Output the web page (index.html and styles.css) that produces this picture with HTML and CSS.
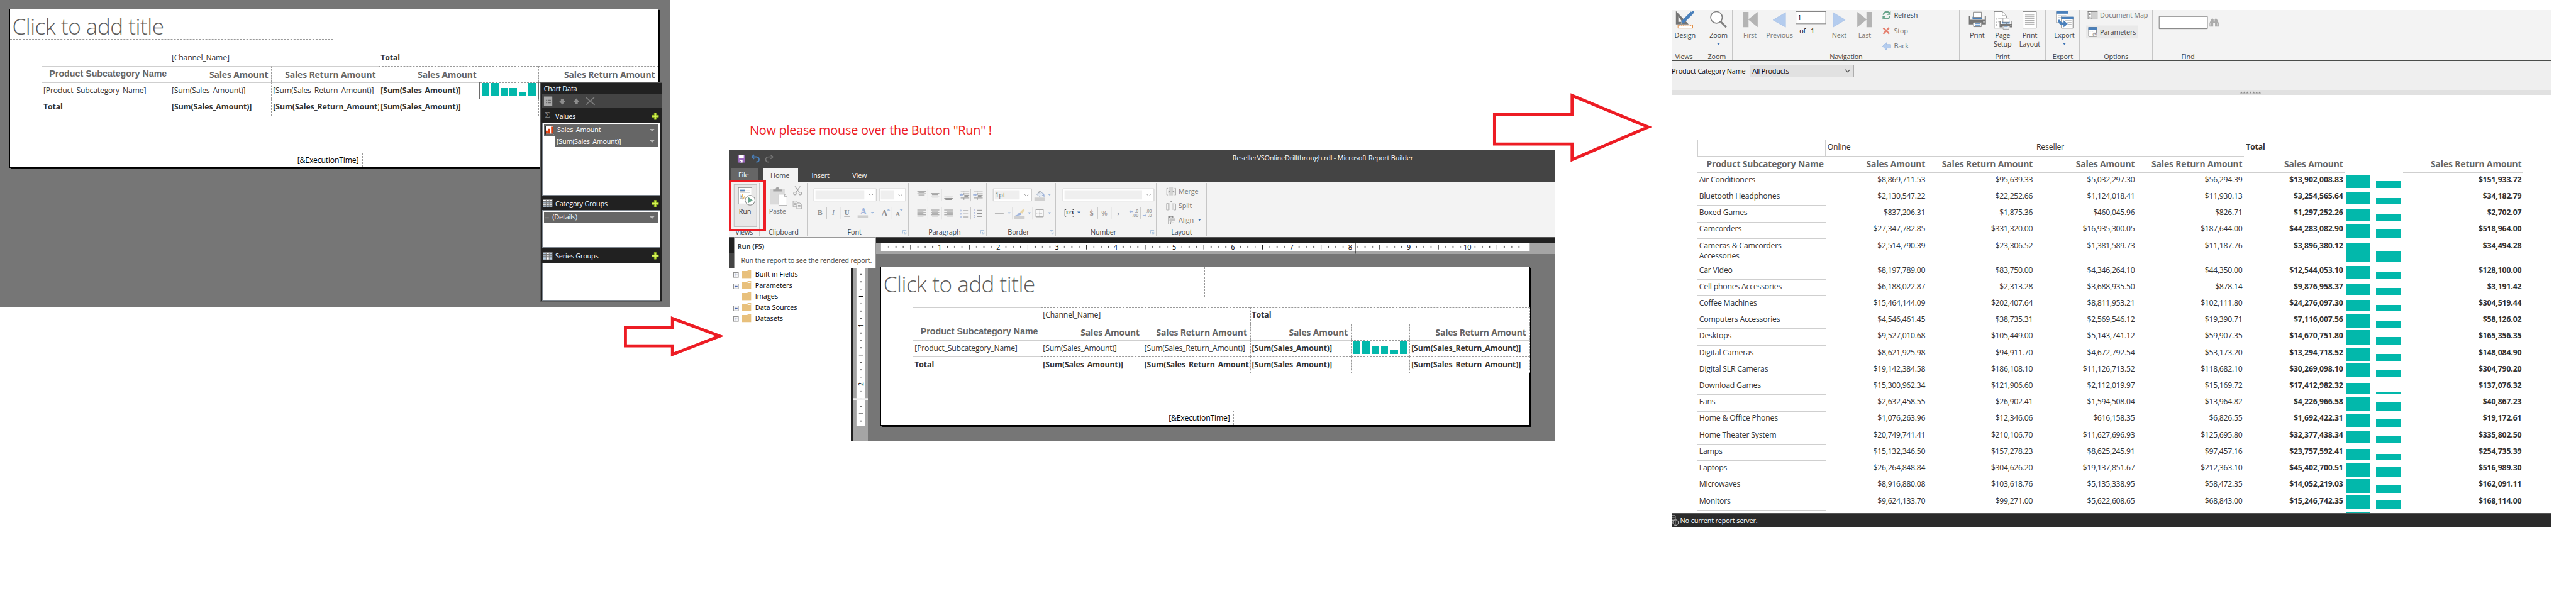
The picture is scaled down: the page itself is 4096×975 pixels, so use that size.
FILE: index.html
```html
<!DOCTYPE html>
<html lang="en">
<head>
<meta charset="utf-8">
<title>Report Builder walkthrough</title>
<link rel="stylesheet" href="styles.css">
</head>
<body>
<svg width="0" height="0" class="defs">
  <defs>
    <symbol id="plus" viewBox="0 0 12 12"><path d="M4.5.5h3v4h4v3h-4v4h-3v-4h-4v-3h4z" fill="#d8f25a" stroke="#8fb81c"/></symbol>
    <symbol id="caret" viewBox="0 0 8 4"><path d="M0 0h8L4 4z" fill="#b9b9b9"/></symbol>
    <symbol id="folder" viewBox="0 0 15 13"><path d="M0 1h8l2-1h5v13H0z" fill="#e8c07c"/><path d="M9 2.5h5" stroke="#fff"/></symbol>
    <symbol id="expand" viewBox="0 0 9 9"><rect x=".5" y=".5" width="8" height="8" fill="#f6f6f6" stroke="#8f8f8f"/><path d="M2 4.5h5M4.5 2v5" stroke="#2f4fa0"/></symbol>
    <symbol id="launch" viewBox="0 0 21 21"><path d="M1.5 17V1.5H19M8 8l9 9M18 9v9H9" fill="none" stroke="#a9c3de" stroke-width="3"/></symbol>
    <pattern id="ticks" width="96" height="14" patternUnits="userSpaceOnUse"><path d="M12.5 5.500v3M24.500 5.500v3M36.500 5.500v3M60.500 5.500v3M72.500 5.500v3M84.500 5.500v3M48.500 4v7" stroke="#000"/></pattern>
    <pattern id="vticks" width="14" height="96" patternUnits="userSpaceOnUse"><path d="M6 12.500h3M6 24.500h3M6 36.500h3M6 60.500h3M6 72.500h3M6 84.500h3M4 48.500h7" stroke="#000"/></pattern>
    <g id="printer"><path d="M0 21h6v18h72V21h6v40h-18v-8H20v8H0z" fill="#757575"/><path d="M18 24h48v12H18z" fill="#4a80bb"/><path d="M22 1h40v26H22z" fill="#fff" stroke="#808080" stroke-width="3"/><path d="M23 51h38v22H23z" fill="#fff" stroke="#808080" stroke-width="3"/><path d="M30 58h24M30 66h24" stroke="#4a80bb" stroke-width="3"/><path d="M71 46h6v6h-6z" fill="#fff"/></g>
  </defs>
</svg>
<main class="canvas">

  <section class="window design-window">
    <div class="page">
      <div class="title-box">Click to add title</div>
      <div class="matrix">
        <div class="c sl st"></div><div class="c sl span2">[Channel_Name]</div><div class="c span3 b end">Total</div>
        <div class="c st h arial">Product Subcategory Name</div><div class="c st h">Sales Amount</div><div class="c st h">Sales Return Amount</div><div class="c h">Sales Amount</div><div class="c"></div><div class="c h end">Sales Return Amount</div>
        <div class="c st">[Product_Subcategory_Name]</div><div class="c st">[Sum(Sales_Amount)]</div><div class="c st">[Sum(Sales_Return_Amount)]</div><div class="c st b">[Sum(Sales_Amount)]</div><div class="c chart selected"><i class="b1"></i><i class="b2"></i><i class="b3"></i><i class="b4"></i><i class="b5"></i><i class="b6"></i></div><div class="c end"></div>
        <div class="c st b last">Total</div><div class="c b last">[Sum(Sales_Amount)]</div><div class="c b last">[Sum(Sales_Return_Amount)]</div><div class="c b last">[Sum(Sales_Amount)]</div><div class="c last"></div><div class="c last end"></div>
      </div>
      <div class="footer"><div class="exec">[&amp;ExecutionTime]</div></div>
    </div>
    <aside class="chart-data">
      <div class="cd-title">Chart Data</div>
      <svg class="cd-tools" viewBox="78 98 588 72"><rect x="87" y="112" width="41" height="45" fill="#a9a9a9"/><path d="M97 130h6M97 143h6M109 130h12M109 143h12" stroke="#666" stroke-width="4"/><path d="M170 123h14v12h8l-15 17-15-17h8z" fill="#8c8c8c"/><path d="M239 150h14v-12h8l-15-17-15 17h8z" fill="#8c8c8c"/><path d="M294 117l42 36M334 116l-40 36" stroke="#7d7d7d" stroke-width="5"/></svg>
      <div class="cd-head"><span class="ic sigma">Σ</span><span>Values</span><svg class="plus"><use href="#plus"/></svg></div>
      <div class="cd-box values">
        <div class="cd-item"><svg class="bars" viewBox="0 0 14 14"><path d="M0 0h14v14H0z" fill="#fff"/><path d="M1 13V8h3v5zM5 13V5h3v8zM9.500 13V1.500H13V13z" fill="#e03c0c"/><path d="M.5 14V.5H13M13.500 1v12.500H0" fill="none" stroke="#222"/></svg><span>Sales_Amount</span><svg class="caret"><use href="#caret"/></svg></div>
        <div class="cd-item sub"><span>[Sum(Sales_Amount)]</span><svg class="caret"><use href="#caret"/></svg></div>
      </div>
      <div class="cd-head"><svg class="ic grid" viewBox="0 0 16 13"><path d="M0 0h16v13H0z" fill="#777"/><path d="M1 1h4v2H1zM6 1h4v2H6zM11 1h4v2h-4zM1 7h4v2H1zM6 7h4v2H6zM11 7h4v2h-4z" fill="#fff"/><path d="M1 4h4v2H1zM6 4h4v2H6zM11 4h4v2h-4zM1 10h4v2H1zM6 10h4v2H6zM11 10h4v2h-4z" fill="#b4cbe0"/></svg><span>Category Groups</span><svg class="plus"><use href="#plus"/></svg></div>
      <div class="cd-box category">
        <div class="cd-item"><svg class="lines" viewBox="0 0 6 6"><path d="M0 .5h6M0 3h6M0 5.500h6" stroke="#858585"/></svg><span>(Details)</span><svg class="caret"><use href="#caret"/></svg></div>
      </div>
      <div class="cd-head"><svg class="ic grid" viewBox="0 0 16 13"><path d="M0 0h16v13H0z" fill="#777"/><path d="M1 1h4v2H1zM1 4h4v2H1zM1 7h4v2H1zM1 10h4v2H1zM11 1h4v2h-4zM11 4h4v2h-4zM11 7h4v2h-4zM11 10h4v2h-4z" fill="#b4cbe0"/><path d="M6 1h4v2H6zM6 4h4v2H6zM6 7h4v2H6zM6 10h4v2H6z" fill="#fff"/></svg><span>Series Groups</span><svg class="plus"><use href="#plus"/></svg></div>
      <div class="cd-box series"></div>
    </aside>
  </section>

  <svg class="arrow arrow-a" viewBox="0 0 160 66"><path d="M2.500 18.500h77V3.500L157 32.500 79.500 62.500v-14h-77z"/></svg>
  <svg class="arrow arrow-b" viewBox="0 0 262 114"><path d="M3.500 34.500h127V4L255 55.500 130.500 109V83.500H3.500z"/></svg>
  <p class="note">Now please mouse over the Button "Run" !</p>

  <section class="window builder">
    <header class="titlebar">
      <svg class="qat" viewBox="75 180 190 50"><path d="M81 189h36v36H81z" fill="#9c68bd"/><path d="M87 189h24v15H87zM90 212h15v13H90z" fill="#fff"/><path d="M93 217h5v8h-5z" fill="#9c68bd"/><path d="M150 197h22q14 1 14 13t-14 12M162 187l-11 10 11 10" fill="none" stroke="#4a80bb" stroke-width="6"/><path d="M255 197h-22q-14 1-14 13t14 12M243 187l11 10-11 10" fill="none" stroke="#777" stroke-width="5"/></svg>
      <span class="wtitle">ResellerVSOnlineDrillthrough.rdl - Microsoft Report Builder</span>
    </header>
    <nav class="tabs"><span class="tab file">File</span><span class="tab home">Home</span><span class="tab insert">Insert</span><span class="tab view">View</span></nav>
    <div class="ribbon">
      <section class="g g-views">
        <svg viewBox="39 324 147 225"><rect x="64.500" y="337.500" width="111" height="207" fill="#e8e8e8" stroke="#bdbdbd" stroke-width="3"/><path d="M85.500 352.500h66v81h-66z" fill="#fff" stroke="#777" stroke-width="3"/><path d="M93 365h24" stroke="#4a80bb" stroke-width="4"/><path d="M93 372h24M120 368h24M93 377h51" stroke="#aaa" stroke-width="2"/><path d="M94 385v21h20" fill="none" stroke="#999" stroke-width="2"/><path d="M97 391h6v12h-6z" fill="#4a80bb"/><path d="M104 386h6v17h-6z" fill="#e8b45c"/><path d="M107 412l12-20" stroke="#e8b45c" stroke-width="4"/><circle cx="143" cy="415" r="24" fill="#fff" stroke="#777" stroke-width="3"/><path d="M134 400l22 15-22 15z" fill="#6aa58c"/><text x="118" y="480" class="m">Run</text></svg>
        <span class="gl">Views</span>
      </section>
      <section class="g g-clip">
        <svg viewBox="189 324 234 225"><path d="M240 361h72v75h-72z" fill="#dadada"/><path d="M255 372v-10h12q0-11 9-11t9 11h12v10z" fill="#a3a3a3"/><path d="M283 385h28l12 12v43h-40z" fill="#fff" stroke="#b3b3b3" stroke-width="3"/><path d="M311 385v12h12" fill="none" stroke="#b3b3b3" stroke-width="3"/><text x="276" y="480" class="m dim">Paste</text><g fill="none" stroke="#a8a8a8" stroke-width="4"><path d="M362 347l22 30M388 347l-22 30"/><circle cx="362" cy="382" r="6.500"/><circle cx="388" cy="382" r="6.500"/></g><g fill="#f3f3f3" stroke="#a8a8a8" stroke-width="3"><path d="M353 419h16l8 8v20h-24z"/><path d="M371 429h16l8 8v20h-24z"/><path d="M377 440h12M377 447h12M358 430h8M358 437h8" /></g></svg>
        <span class="gl">Clipboard</span>
      </section>
      <section class="g g-font">
        <svg viewBox="426 324 492 225"><g fill="#fff" stroke="#c6c6c6" stroke-width="3"><path d="M457.500 358.500h306v60h-306zM778.500 358.500h129v60h-129z"/></g><path d="M465 366h240v45H465zM786 366h63v45h-63z" fill="#efefef"/><path d="M726 383l12 12 12-12M870 383l12 12 12-12" fill="none" stroke="#9a9a9a" stroke-width="3"/><path d="M520 448v58M586 448v58M841 448v58" stroke="#c6c6c6" stroke-width="3"/><text x="487" y="489" class="serif">B</text><text x="552" y="489" class="serif it">I</text><text x="619" y="487" class="serif">U</text><path d="M606 494h27" stroke="#8e8e8e" stroke-width="3"/><text x="700" y="486" class="serif big blue">A</text><path d="M672 489h51v14h-51z" fill="#cfcfcf"/><path d="M737 472h16l-8 8z" fill="#9fb9dc"/><text x="804" y="495" class="serif big">A</text><path d="M816 465l8-8 8 8z" fill="#9fb9dc"/><text x="869" y="495" class="serif sm">A</text><path d="M879 460h15l-7 8z" fill="#9fb9dc"/></svg>
        <span class="gl">Font</span><svg class="launch"><use href="#launch"/></svg>
      </section>
      <section class="g g-para">
        <svg viewBox="921 324 381 225"><path d="M1015 360v60M1081 360v60M1225 360v60M1015 450v60M1081 450v60M1225 450v60" stroke="#c6c6c6" stroke-width="3"/><g stroke="#8e8e8e" stroke-width="3" fill="none"><path d="M963 371h42M969 377h30M963 383h42M969 389h30M1029 382h42M1035 388h30M1029 394h42M1035 400h30M1095 394h42M1101 400h30M1095 406h42M1101 412h30"/><path d="M963 463h42M963 469h30M963 475h42M963 481h30M963 487h42M963 493h30M1029 463h42M1035 469h30M1029 475h42M1035 481h30M1029 487h42M1035 493h30M1095 463h42M1107 469h30M1095 475h42M1107 481h30M1095 487h42M1107 493h30"/><path d="M1176 374h42M1194 383h24M1194 390h24M1194 397h18M1176 404h42M1242 374h42M1260 383h24M1260 390h24M1260 397h18M1242 404h42"/><path d="M1192 368v45M1258 368v45" stroke-dasharray="3 3"/><path d="M1188 466h24M1188 482h24M1188 497h24M1255 464h27M1255 480h27M1255 495h27"/></g><path d="M1170 388l9-8v5h10v6h-10v5zM1256 388l-9-8v5h-10v6h10v5z" fill="#9fb4dc"/><g fill="none" stroke="#9fb4dc" stroke-width="2.500"><circle cx="1177" cy="466" r="3"/><circle cx="1177" cy="482" r="3"/><circle cx="1177" cy="497" r="3"/></g><text x="1243" y="470" class="nums">1</text><text x="1243" y="486" class="nums">2</text><text x="1243" y="501" class="nums">3</text></svg>
        <span class="gl">Paragraph</span><svg class="launch"><use href="#launch"/></svg>
      </section>
      <section class="g g-border">
        <svg viewBox="105 204 336 225"><path d="M136.500 238.500h189v60h-189z" fill="#fff" stroke="#c6c6c6" stroke-width="3"/><path d="M144 246h123v45H144z" fill="#efefef"/><text x="146" y="280" class="dim">1pt</text><path d="M288 263l12 12 12-12" fill="none" stroke="#9a9a9a" stroke-width="3"/><path d="M339 282h51v15h-51zM240 372h51v15h-51z" fill="#cfcfcf"/><path d="M350 266l18-14 16 13-15 15z" fill="#e3eaf4" stroke="#9aa9c0" stroke-width="2.500"/><path d="M361 261q-2-12 6-12t4 16" fill="none" stroke="#999" stroke-width="2.500"/><path d="M378 258q13 3 10 22-7-4-8-13z" fill="#9fb4dc"/><path d="M405 264h15l-7 8zM207 354h15l-7 8zM306 354h15l-7 8zM405 354h15l-7 8z" fill="#9fb9dc"/><path d="M145 361h43" stroke="#999" stroke-width="3"/><path d="M232 330v60M331 330v60" stroke="#c6c6c6" stroke-width="3"/><path d="M243 370q17-2 18-12l10-3 5 9q-8 9-33 6z" fill="#9fb4dc"/><path d="M268 354l15-15q8-2 8 5l-12 17z" fill="#e9d6a8"/><path d="M346.500 340.500h36v36h-36z" fill="#f8f8f8" stroke="#858585" stroke-width="3"/><path d="M364 345v29M350 359h29" stroke="#aaa" stroke-width="2.500" stroke-dasharray="3 3"/></svg>
        <span class="gl">Border</span><svg class="launch"><use href="#launch"/></svg>
      </section>
      <section class="g g-number">
        <svg viewBox="444 204 492 225"><path d="M478.500 238.500h447v60h-447z" fill="#fff" stroke="#c6c6c6" stroke-width="3"/><path d="M486 246h381v45H486z" fill="#efefef"/><path d="M888 263l12 12 12-12" fill="none" stroke="#9a9a9a" stroke-width="3"/><path d="M494 341h-6v33h6M526 341h6v33h-6" fill="none" stroke="#333" stroke-width="3"/><text x="510" y="366" class="serif n123">123</text><path d="M549 351h16l-8 9z" fill="#3f74b5"/><path d="M649 328v58M715 328v58M859 328v58" stroke="#c6c6c6" stroke-width="3"/><text x="619" y="371" class="serif">$</text><text x="682" y="371" class="m pct">%</text><text x="750" y="366" class="serif">,</text><text x="849" y="356" class="dec">.0</text><text x="849" y="376" class="dec">.00</text><text x="915" y="356" class="dec">.00</text><text x="915" y="376" class="dec">.0</text><path d="M804 350l9-7v5h10v5h-10v5zM889 370l-9-7v5h-10v5h10v5z" fill="#9fb4dc"/></svg>
        <span class="gl">Number</span><svg class="launch"><use href="#launch"/></svg>
      </section>
      <section class="g g-layout">
        <svg viewBox="939 204 243 225"><path d="M1001 229h19v42h-19z" fill="#d4d4d4"/><g fill="none" stroke="#aaa" stroke-width="3"><path d="M995 236h-6v33h6M1027 236h6v33h-6M988 341v-30h9v32h-9zM1024 341v-28h9v30h-9z"/></g><path d="M997 246l9 7-9 7zM1026 246l-9 7 9 7zM1005 298h12l-6 7z" fill="#999"/><path d="M997 310h9v33h-9zM1016 310h7v33h-7z" fill="#d8d8d8"/><path d="M998 372v42" stroke="#666" stroke-width="3"/><path d="M1003 374h16v7h-16z" fill="none" stroke="#666" stroke-width="3"/><path d="M1002 384h27v12h-27z" fill="#c4c4c4"/><path d="M1023 406h-18M1010 400l-6 6 6 6" fill="none" stroke="#666" stroke-width="3"/><text x="1047" y="262" class="dim">Merge</text><text x="1047" y="333" class="dim">Split</text><text x="1047" y="405" class="dim">Align</text><path d="M1142 387h16l-8 9z" fill="#3f74b5"/></svg>
        <span class="gl">Layout</span>
      </section>
    </div>
    <div class="band"></div>
    <div class="workspace">
      <aside class="report-data">
        <div class="rd-dark"></div><div class="rd-grey"></div>
        <ul class="tree">
          <li><svg class="ex"><use href="#expand"/></svg><svg class="fo"><use href="#folder"/></svg>Built-in Fields</li>
          <li><svg class="ex"><use href="#expand"/></svg><svg class="fo"><use href="#folder"/></svg>Parameters</li>
          <li><span class="ex"></span><svg class="fo"><use href="#folder"/></svg>Images</li>
          <li><svg class="ex"><use href="#expand"/></svg><svg class="fo"><use href="#folder"/></svg>Data Sources</li>
          <li><svg class="ex"><use href="#expand"/></svg><svg class="fo"><use href="#folder"/></svg>Datasets</li>
        </ul>
      </aside>
      <div class="split"></div>
      <div class="designer">
        <svg class="hruler" viewBox="0 0 1148 19"><path d="M45 0h1062v14H45z" fill="#fff"/><g transform="translate(45 0)"><rect width="1050" height="14" fill="url(#ticks)"/><g class="rn"><text x="96" y="11">1</text><text x="192" y="11">2</text><text x="288" y="11">3</text><text x="384" y="11">4</text><text x="480" y="11">5</text><text x="576" y="11">6</text><text x="672" y="11">7</text><text x="768" y="11">8</text><text x="864" y="11">9</text><text x="960" y="11">10</text></g><path d="M776.500 0v18" stroke="#000"/></g></svg>
        <div class="dcols">
          <svg class="vruler" viewBox="0 0 24 306"><path d="M5 21h14v260H5z" fill="#fff"/><g transform="translate(5 21)"><rect width="14" height="254" fill="url(#vticks)"/><g class="rn"><text transform="translate(11 96) rotate(-90)">1</text><text transform="translate(11 192) rotate(-90)">2</text></g></g><path d="M0 236h24v3H0z" fill="#efefef"/></svg>
          <div class="surface">
            <div class="page">
              <div class="title-box">Click to add title</div>
              <div class="matrix">
                <div class="c sl st"></div><div class="c sl span2">[Channel_Name]</div><div class="c span3 b end">Total</div>
                <div class="c st h arial">Product Subcategory Name</div><div class="c st h">Sales Amount</div><div class="c st h">Sales Return Amount</div><div class="c h">Sales Amount</div><div class="c"></div><div class="c h end">Sales Return Amount</div>
                <div class="c st">[Product_Subcategory_Name]</div><div class="c st">[Sum(Sales_Amount)]</div><div class="c st">[Sum(Sales_Return_Amount)]</div><div class="c st b">[Sum(Sales_Amount)]</div><div class="c chart"><i class="b1"></i><i class="b2"></i><i class="b3"></i><i class="b4"></i><i class="b5"></i><i class="b6"></i></div><div class="c st b end">[Sum(Sales_Return_Amount)]</div>
                <div class="c st b last">Total</div><div class="c b last">[Sum(Sales_Amount)]</div><div class="c b last">[Sum(Sales_Return_Amount)]</div><div class="c b last">[Sum(Sales_Amount)]</div><div class="c last"></div><div class="c b last end">[Sum(Sales_Return_Amount)]</div>
              </div>
              <div class="footer"><div class="exec">[&amp;ExecutionTime]</div></div>
            </div>
          </div>
        </div>
      </div>
    </div>
    <div class="tooltip"><b>Run (F5)</b><span>Run the report to see the rendered report.</span></div>
    <div class="highlight"></div>
  </section>

  <section class="window viewer">
    <div class="vribbon">
      <section class="g v-views">
        <svg viewBox="48 48 141 207"><path d="M69 53v65h63zM81 80l19 26H81z" fill="#757575" fill-rule="evenodd"/><path d="M92 117l5-16 46-46 12 11-47 46z" fill="#4a80bb"/><path d="M146 57l7-6q7 2 6 8l-6 7z" fill="#4a80bb"/><path d="M93 116l3-9 6 6z" fill="#e8c48c"/><path d="M79.500 121.500h72v15h-72z" fill="#fff" stroke="#e08a3e" stroke-width="3"/><path d="M88 122v5M97 122v5M106 122v5M115 122v5M124 122v5M133 122v5M142 122v5" stroke="#e08a3e" stroke-width="2.500"/><text x="114" y="183" class="m">Design</text></svg>
        <span class="gl">Views</span>
      </section>
      <section class="g v-zoom">
        <svg viewBox="192 48 153 207"><circle cx="267" cy="84" r="28.500" fill="#fff" stroke="#808080" stroke-width="5"/><path d="M288 105l27 27" stroke="#808080" stroke-width="9"/><text x="277" y="183" class="m">Zoom</text><path d="M269 210h16l-8 9z" fill="#3f74b5"/></svg>
        <span class="gl">Zoom</span>
      </section>
      <section class="g v-nav">
        <svg viewBox="348 48 1110 207"><path d="M399 57h27v36l45-36v75l-45-36v36h-27zM1032 57h-27v36l-45-36v75l45-36v36h27z" fill="#b4b4b4"/><path d="M608 60v72l-62-35zM841 60v72l60-36z" fill="#b4ccee" stroke="#a3bde4" stroke-width="2"/><text x="433" y="183" class="m dim">First</text><text x="578" y="183" class="m dim">Previous</text><path d="M658.500 55.500h147v60h-147z" fill="#fff" stroke="#777" stroke-width="3"/><text x="667" y="96" class="k">1</text><text x="676" y="161" class="k">of</text><text x="731" y="161" class="k">1</text><text x="871" y="183" class="m dim">Next</text><text x="996" y="183" class="m dim">Last</text><g fill="none" stroke="#6aa58c" stroke-width="7"><path d="M1088 72q2-15 18-15 8 0 13 5M1120 76q-2 15-17 15-9 0-14-6"/></g><path d="M1124 53v19h-18zM1084 95V76h18z" fill="#6aa58c"/><path d="M1088 136l29 28M1116 135l-28 30" stroke="#e5806f" stroke-width="8"/><path d="M1084 226l19-18v9h21v18h-21v9z" fill="#b4ccee" stroke="#8fb0df" stroke-width="2"/><text x="1140" y="84">Refresh</text><text x="1140" y="162" class="dim">Stop</text><text x="1140" y="237" class="dim">Back</text></svg>
        <span class="gl">Navigation</span>
      </section>
      <section class="g v-print">
        <svg viewBox="81 48 420 207"><use href="#printer" x="126" y="57"/><text x="167" y="183" class="m">Print</text><path d="M250.500 55.500h40l20 20v61h-60z" fill="#fff" stroke="#808080" stroke-width="3"/><path d="M290 56v20h20" fill="none" stroke="#808080" stroke-width="3"/><g fill="none" stroke="#999" stroke-width="2.500"><circle cx="262" cy="91" r="3"/><circle cx="262" cy="106" r="3"/><circle cx="262" cy="121" r="3"/><path d="M270 91h18M270 106h8"/></g><use href="#printer" transform="translate(277 87) scale(.75)"/><text x="292" y="183" class="m">Page</text><text x="292" y="228" class="m">Setup</text><path d="M391.500 55.500h66v81h-66z" fill="#fff" stroke="#808080" stroke-width="3"/><path d="M402 72h45M402 81h45M402 90h45M402 99h45M402 108h45M402 117h45" stroke="#aaa" stroke-width="3"/><text x="425" y="183" class="m">Print</text><text x="425" y="228" class="m">Layout</text></svg>
        <span class="gl">Print</span>
      </section>
      <section class="g v-export">
        <svg viewBox="504 48 165 207"><path d="M556.500 56h57v54h-57z" fill="#fff" stroke="#808080" stroke-width="3"/><path d="M555 54h60v12h-60z" fill="#4a80bb"/><path d="M565 76h40M565 85h15v-9" fill="none" stroke="#aaa" stroke-width="3"/><path d="M580.500 83h57v54h-57z" fill="#fff" stroke="#808080" stroke-width="3"/><path d="M579 81h60v12h-60z" fill="#4a80bb"/><path d="M600 100h30M610 109h20M612 118h18M606 127h24" stroke="#aaa" stroke-width="3"/><path d="M564 96h10q1 13 17 13v-11l21 18-21 17v-11q-27 0-27-26z" fill="#4a80bb"/><text x="595" y="183" class="m">Export</text><path d="M587 210h16l-8 9z" fill="#3f74b5"/></svg>
        <span class="gl">Export</span>
      </section>
      <section class="g v-options">
        <svg viewBox="672 48 354 207"><path d="M712.500 52.500h45v39h-45z" fill="#fff" stroke="#777" stroke-width="3"/><path d="M711 51h48v6h-48z" fill="#777"/><path d="M732 57h24v33h-24z" fill="#cfcfcf"/><path d="M731 57v34M717 64h9M717 71h9M717 78h9M717 85h9" stroke="#777" stroke-width="3"/><text x="771" y="84" class="dim">Document Map</text><path d="M703 124h256v64H703z" fill="#e9e9e9"/><path d="M715.500 133h39v45h-39z" fill="#fff" stroke="#777" stroke-width="3"/><path d="M714 132h42v12h-42z" fill="#4a80bb"/><path d="M720 152h6M730 152h8M720 161h6M730 161h6M720 170h12" stroke="#777" stroke-width="3"/><circle cx="745" cy="167" r="11" fill="#f3f3f3"/><text x="745" y="175" class="at">@</text><text x="771" y="168">Parameters</text></svg>
        <span class="gl">Options</span>
      </section>
      <section class="g v-find">
        <svg viewBox="1029 48 345 207"><path d="M1060.500 79.500h237v60h-237z" fill="#fff" stroke="#777" stroke-width="3"/><path d="M1308 129v-18l8-17q6-8 12 0v10h5V94q6-8 12 0l8 17v18h-18v-19h-9v19z" fill="#ababab"/><path d="M1313 112v12M1347 112v12" stroke="#eee" stroke-width="3"/></svg>
        <span class="gl">Find</span>
      </section>
    </div>
    <div class="params"><label>Product Category Name</label><div class="select"><span>All Products</span><svg viewBox="0 0 10 6"><path d="M1 .8l4 4 4-4" fill="none" stroke="#555" stroke-width="1.200"/></svg></div></div>
    <div class="splitter"><svg viewBox="0 0 34 4"><path d="M0 3.500l2-3 2 3zM5 3.500l2-3 2 3zM10 3.500l2-3 2 3zM15 3.500l2-3 2 3zM20 3.500l2-3 2 3zM25 3.500l2-3 2 3zM30 3.500l2-3 2 3z" fill="#8a8a8a"/></svg></div>
    <div class="report">
      <table class="rt">
        <colgroup><col class="k1"><col class="k2"><col class="k3"><col class="k4"><col class="k5"><col class="k6"><col class="k7"><col class="k8"></colgroup>
        <thead>
          <tr class="r1"><th class="box"></th><th colspan="2" class="ul">Online</th><th colspan="2" class="ul">Reseller</th><th colspan="3" class="tb">Total</th></tr>
          <tr class="r2"><th class="ul">Product Subcategory Name</th><th class="ul">Sales Amount</th><th class="ul">Sales Return Amount</th><th class="ul">Sales Amount</th><th class="ul">Sales Return Amount</th><th class="ul">Sales Amount</th><th></th><th class="ul">Sales Return Amount</th></tr>
        </thead>
        <tbody id="rows"></tbody>
      </table>
    </div>
    <footer class="status"><svg viewBox="0 0 12 18"><path d="M1 1h5v6H1M1 4h4M1 9h4" fill="none" stroke="#ddd"/><circle cx="6.500" cy="12.500" r="4.500" fill="#2b2b2b" stroke="#ddd"/><path d="M6.500 8v9" stroke="#999" stroke-width=".6"/></svg>No current report server.</footer>
  </section>
</main>
<script src="report.js"></script>
</body>
</html>
```

FILE: report.js
```js
// name, online sales, online returns, reseller sales, reseller returns, total sales, total returns, bar heights
const data = [
  ["Air Conditioners", "$8,869,711.53", "$95,639.33", "$5,032,297.30", "$56,294.39", "$13,902,008.83", "$151,933.72", 21, 12],
  ["Bluetooth Headphones", "$2,130,547.22", "$22,252.66", "$1,124,018.41", "$11,930.13", "$3,254,565.64", "$34,182.79", 21, 11],
  ["Boxed Games", "$837,206.31", "$1,875.36", "$460,045.96", "$826.71", "$1,297,252.26", "$2,702.07", 20, 11],
  ["Camcorders", "$27,347,782.85", "$331,320.00", "$16,935,300.05", "$187,644.00", "$44,283,082.90", "$518,964.00", 22, 14],
  ["Cameras & Camcorders Accessories", "$2,514,790.39", "$23,306.52", "$1,381,589.73", "$11,187.76", "$3,896,380.12", "$34,494.28", 30, 17],
  ["Car Video", "$8,197,789.00", "$83,750.00", "$4,346,264.10", "$44,350.00", "$12,544,053.10", "$128,100.00", 20, 10],
  ["Cell phones Accessories", "$6,188,022.87", "$2,313.28", "$3,688,935.50", "$878.14", "$9,876,958.37", "$3,191.42", 19, 11],
  ["Coffee Machines", "$15,464,144.09", "$202,407.64", "$8,811,953.21", "$102,111.80", "$24,276,097.30", "$304,519.44", 19, 11],
  ["Computers Accessories", "$4,546,461.45", "$38,735.31", "$2,569,546.12", "$19,390.71", "$7,116,007.56", "$58,126.02", 22, 12],
  ["Desktops", "$9,527,010.68", "$105,449.00", "$5,143,741.12", "$59,907.35", "$14,670,751.80", "$165,356.35", 23, 12],
  ["Digital Cameras", "$8,621,925.98", "$94,911.70", "$4,672,792.54", "$53,173.20", "$13,294,718.52", "$148,084.90", 21, 11],
  ["Digital SLR Cameras", "$19,142,384.58", "$186,108.10", "$11,126,713.52", "$118,682.10", "$30,269,098.10", "$304,790.20", 23, 13],
  ["Download Games", "$15,300,962.34", "$121,906.60", "$2,112,019.97", "$15,169.72", "$17,412,982.32", "$137,076.32", 18, 2],
  ["Fans", "$2,632,458.55", "$26,902.41", "$1,594,508.04", "$13,964.82", "$4,226,966.58", "$40,867.23", 21, 13],
  ["Home & Office Phones", "$1,076,263.96", "$12,346.06", "$616,158.35", "$6,826.55", "$1,692,422.31", "$19,172.61", 22, 12],
  ["Home Theater System", "$20,749,741.41", "$210,106.70", "$11,627,696.93", "$125,695.80", "$32,377,438.34", "$335,802.50", 20, 11],
  ["Lamps", "$15,132,346.50", "$157,278.23", "$8,625,245.91", "$97,457.16", "$23,757,592.41", "$254,735.39", 18, 10],
  ["Laptops", "$26,264,848.84", "$304,626.20", "$19,137,851.67", "$212,363.10", "$45,402,700.51", "$516,989.30", 21, 15],
  ["Microwaves", "$8,916,880.08", "$103,618.76", "$5,135,338.95", "$58,472.35", "$14,052,219.03", "$162,091.11", 22, 12],
  ["Monitors", "$9,624,133.70", "$99,271.00", "$5,622,608.65", "$68,843.00", "$15,246,742.35", "$168,114.00", 23, 14],
  ["", "", "", "", "", "", "", 22, 0]
];

document.getElementById("rows").innerHTML = data.map(r => {
  const name = r[0].replace("&", "&amp;");
  const cls = r[0].length > 30 ? ' class="tall"' : "";
  return `<tr${cls}><td class="name">${name}</td><td>${r[1]}</td><td>${r[2]}</td><td>${r[3]}</td><td>${r[4]}</td>` +
    `<td class="tot">${r[5]}</td><td class="spark"><div><i style="height:${r[7]}px"></i><i style="height:${r[8]}px"></i></div></td>` +
    `<td class="tot">${r[6]}</td></tr>`;
}).join("");
```

FILE: styles.css
```css
*{box-sizing:border-box}
html{overflow:hidden;background:#fff}
body{margin:0;background:#fff;font:11.2px/14px "Open Sans","Noto Sans",sans-serif;letter-spacing:-.18px;color:#000}
svg{display:block;overflow:visible}
.defs{position:absolute}
.canvas{position:relative;width:4216px;height:1003px;overflow:hidden;zoom:.9715}
.window{position:absolute;overflow:hidden}

/* report page */
.design-window{left:0;top:0;width:1097px;height:502px;background:#767676;padding:14px 0 0 15px}
.page{width:1063px;height:261px;background:#fff;border:1px solid #000;box-shadow:2px 2px 0 #000;color:#333}
.title-box{width:530px;height:50px;border-right:1px dashed #999;border-bottom:1px dashed #999;padding-left:4px;font-size:36px;font-weight:300;line-height:50px;padding-top:4px;letter-spacing:-.46px;color:#5c5c5c;white-space:nowrap}
.matrix{display:grid;grid-template-columns:210px 166px 176px 165px 96px 197px;grid-template-rows:27px 27px 27px 28px;margin:16px 0 0 52px;width:1010px;font-size:12.6px;line-height:17px;letter-spacing:-.21px;white-space:nowrap}
.c{border-left:1px dashed #999;border-top:1px dashed #999;padding:4px 3px 0 2px;overflow:hidden;background:#fff}
.span2{grid-column:span 2}
.span3{grid-column:span 3}
.sl{border-left:1px solid #cfcfcf}
.st{border-top:1px solid #cfcfcf}
.end{border-right:1px dashed #999}
.last{border-bottom:1px dashed #999}
.b{font-weight:700;letter-spacing:-.08px}
.h{font-size:14.300px;font-weight:700;letter-spacing:-.12px;color:#666;text-align:right;padding:5px 5px 0 0}
.arial{font-family:"Liberation Sans",Arial,sans-serif;font-size:14.670px;letter-spacing:0;padding-top:3px}
.chart{display:flex;align-items:flex-end;padding:0 0 4px 2px}
.chart i{background:#02b8ab;width:12px;margin-right:3px}
.chart .b1{height:22px}
.chart .b2{height:24px;width:13px}
.chart .b3,.chart .b4{height:14px}
.chart .b5{height:7px;width:13px}
.chart .b6{height:24px;margin:0}
.selected{outline:2px solid #6b6b6b;outline-offset:0;position:relative}
.footer{margin-top:41px;border-top:1px dashed #999;height:43px;padding:18px 0 0 384px}
.exec{width:194px;height:24px;border:1px dashed #999;border-bottom:0;padding:3px 6px 0 0;text-align:right;color:#000;font-size:12.600px;line-height:17px;letter-spacing:-.21px}

/* chart data pane */
.chart-data{position:absolute;left:884px;top:135px;width:200px;height:359px;background:#212121;border:1px solid #5a5a5a;padding:0 2px;color:#fff}
.cd-title{height:17px;padding:2px 0 0 3px}
.cd-tools{width:196px;height:24px;background:#444}
.cd-head{display:flex;align-items:center;height:24px;gap:5px;padding:2px 3px 0 1px}
.cd-head .ic{width:16px;height:13px}
.cd-head .plus{width:12px;height:12px;margin-left:auto}
.sigma{font:700 14px/13px "Liberation Serif",serif;color:#777;text-align:center}
.cd-box{background:#fff;border:1px solid #7f8790;padding:2px;width:194px}
.values{height:119px}
.category{height:62px}
.series{height:62px}
.cd-item{background:#666;height:18px;display:flex;align-items:center;gap:6px;padding:0 7px 2px 2px;margin-bottom:1px}
.cd-item.sub{margin-left:18px;padding-left:3px;letter-spacing:-.3px}
.cd-item .bars{width:14px;height:14px;margin-top:2px}
.cd-item .lines{width:6px;height:6px;margin-top:2px}
.cd-item .caret{width:8px;height:4px;margin:2px 0 0 auto}

/* annotations */
.arrow{position:absolute;fill:none;stroke:#ed1c24;stroke-width:5}
.arrow-a{left:1021px;top:518px;width:160px;height:66px}
.arrow-b{left:2443px;top:152px;width:262px;height:114px;stroke-width:5}
.note{position:absolute;left:1227px;top:198px;margin:0;font-size:20.500px;line-height:30px;letter-spacing:-.26px;color:#ed1c24;white-space:nowrap}

/* builder window */
.builder{left:1193px;top:246px;width:1352px;height:476px}
.titlebar{height:30px;background:#444;display:flex;align-items:center;color:#fff}
.qat{width:63.300px;height:16.700px;margin:-4px 0 0 12px}
.wtitle{margin:-6px 0 0 749px;white-space:nowrap}
.tabs{height:22px;background:#444;display:flex;color:#fff;line-height:22px;text-align:center}
.tab{height:22px}
.file{margin-left:3px;width:45px;background:#666;line-height:20px;padding-right:3px}
.home{margin-left:9px;width:56px;background:#f3f3f3;color:#444;padding-right:3px}
.insert{margin-left:22px;width:30px}
.view{margin-left:37px;width:24px}
.ribbon{height:90px;background:#f3f3f3;display:flex;padding-top:0}
.g{position:relative;display:flex;flex-direction:column;align-items:stretch;color:#444}
.g::after{content:"";position:absolute;right:0;top:2px;bottom:1px;width:1px;background:#c6c6c6}
.g>svg:first-child{height:75px;flex:none}
.gl{text-align:center;height:15px;line-height:15px}
.g .launch{position:absolute;right:3px;bottom:4px;width:7px;height:7px}
.g text{font-size:33.600px;letter-spacing:-.5px;fill:#444}
.g .m{text-anchor:middle}
.g .dim{fill:#777}
.g .k{fill:#000}
.g .serif{font-family:"Liberation Serif",serif;font-weight:700;font-size:36px;text-anchor:middle;fill:#8e8e8e}
.g .it{font-style:italic;font-weight:400}
.g .big{font-size:44px}
.g .sm{font-size:32px}
.g .blue{fill:#9fb4dc}
.g .n123{font-size:27px;fill:#222;letter-spacing:-1px}
.g .pct{fill:#8e8e8e;font-size:36px}
.g .dec{font-size:21px;font-weight:600;fill:#9a9a9a;text-anchor:end;letter-spacing:0}
.g .nums{font-size:15px;font-weight:700;text-anchor:middle;fill:#9fb4dc}
.g .at{font-size:24px;text-anchor:middle;fill:#666}
.g-views{width:50px}
.g-clip{width:79px}
.g-font{width:165px}
.g-font .gl{padding-right:12px}
.g-para{width:128px}
.g-para .gl{padding-right:10px}
.g-border{width:113px}
.g-border .gl{padding-right:9px}
.g-number{width:165px}
.g-number .gl{padding-right:9px}
.g-layout{width:82px}
.g-views>svg:first-child{width:49px}
.g-clip>svg:first-child{width:78px}
.g-font>svg:first-child{width:164px}
.g-para>svg:first-child{width:127px}
.g-border>svg:first-child{width:112px}
.g-number>svg:first-child{width:164px}
.g-layout>svg:first-child{width:81px}
.band{height:9px;background:#212121;border-top:1px solid #555}
.workspace{display:flex;height:325px}
.report-data{width:200px;background:#fff}
.rd-dark{height:18px;background:#212121}
.rd-grey{height:25px;background:#444}
.tree{list-style:none;margin:0;padding:0 0 0 7px;letter-spacing:0}
.tree li{display:flex;align-items:center;height:18px}
.tree .ex{width:9px;height:9px;margin-top:3px}
.tree .fo{width:15px;height:13px;margin:0 6px}
.split{width:4px;background:#212121}
.designer{width:1148px;background:#a5a5a5}
.hruler{width:1148px;height:19px}
.rn{font-size:11.200px;text-anchor:middle;letter-spacing:0}
.dcols{display:flex}
.vruler{width:24px;height:306px}
.surface{width:1124px;height:306px;background:#767676;padding:20px 0 0 20px}
.tooltip{position:absolute;left:8px;top:142px;width:233px;height:52px;background:#fff;border:1px solid #999;padding:7px 0 0 5px;display:flex;flex-direction:column;gap:9px;color:#444;white-space:nowrap}
.tooltip span{padding-left:6px}
.highlight{position:absolute;left:0;top:48px;width:61px;height:85px;border:5px solid #ed1c24}

/* viewer window */
.viewer{left:2736px;top:16px;width:1440px;height:847px}
.vribbon{display:flex;height:83px;background:#f3f3f3}
.vribbon .g::after{top:0}
.vribbon .g>svg:first-child{height:69px}
.vribbon .gl{height:14px}
.v-views{width:48px}
.v-views .gl{padding-right:8px}
.v-zoom{width:52px}
.v-nav{width:371px}
.v-print{width:141px}
.v-export{width:56px}
.v-options{width:119px}
.v-find{width:116px}
.v-views>svg:first-child{width:47px}
.v-zoom>svg:first-child{width:51px}
.v-nav>svg:first-child{width:370px}
.v-print>svg:first-child{width:140px}
.v-export>svg:first-child{width:55px}
.v-options>svg:first-child{width:118px}
.v-find>svg:first-child{width:115px}
.params{display:flex;height:48px;background:#efefef;border-top:2px solid #4a4d4a;padding-top:6px}
.params label{width:128px;padding-top:3px}
.select{width:170px;height:21px;background:#e1e1e1;border:1px solid #adadad;display:flex;align-items:center;justify-content:space-between;padding:0 4px 0 3px}
.select svg{width:10px;height:6px}
.splitter{height:8px;background:#e1e1e1;display:flex;align-items:center;padding-left:930px}
.splitter svg{width:34px;height:4px}
.report{height:685px;overflow:hidden;padding:74px 0 0 42px}
.rt{border-collapse:separate;border-spacing:0;table-layout:fixed;width:1352px;color:#333;font-size:12.600px;line-height:17px}
.k1{width:210px}
.k2{width:166px}
.k3{width:176px}
.k4{width:167px}
.k5{width:176px}
.k6{width:165px}
.k7{width:95px}
.k8{width:197px}
.rt th,.rt td{padding:3px 3px 0 0;vertical-align:top;text-align:right}
.r1 th{height:27px;font-weight:400;text-align:left;padding:4px 0 0 3px;letter-spacing:-.15px}
.r1 .tb{font-weight:700}
.r1 .box{border:1px solid #cfcfcf}
.ul{border-bottom:1px solid #cfcfcf}
.r2 th{height:27px;font-size:14.300px;letter-spacing:-.12px;color:#666;padding-top:4px;white-space:nowrap}
.rt td{height:27px;letter-spacing:-.29px}
.rt .tall td{height:40px}
.rt .name{text-align:left;border-bottom:1px solid #cfcfcf;padding:3px 30px 0 3px;letter-spacing:-.2px}
.rt .tot{font-weight:700;letter-spacing:-.14px}
.rt .spark{padding:0}
.spark div{display:flex;align-items:flex-end;gap:9px;height:25px;padding-left:2px}
.tall .spark div{height:37px}
.spark i{width:40px;background:#02b8ab}
.status{height:23px;background:#2b2b2b;border-top:2px solid #555;color:#fff;display:flex;align-items:center;gap:2px}
.status svg{width:12px;height:18px}
```
